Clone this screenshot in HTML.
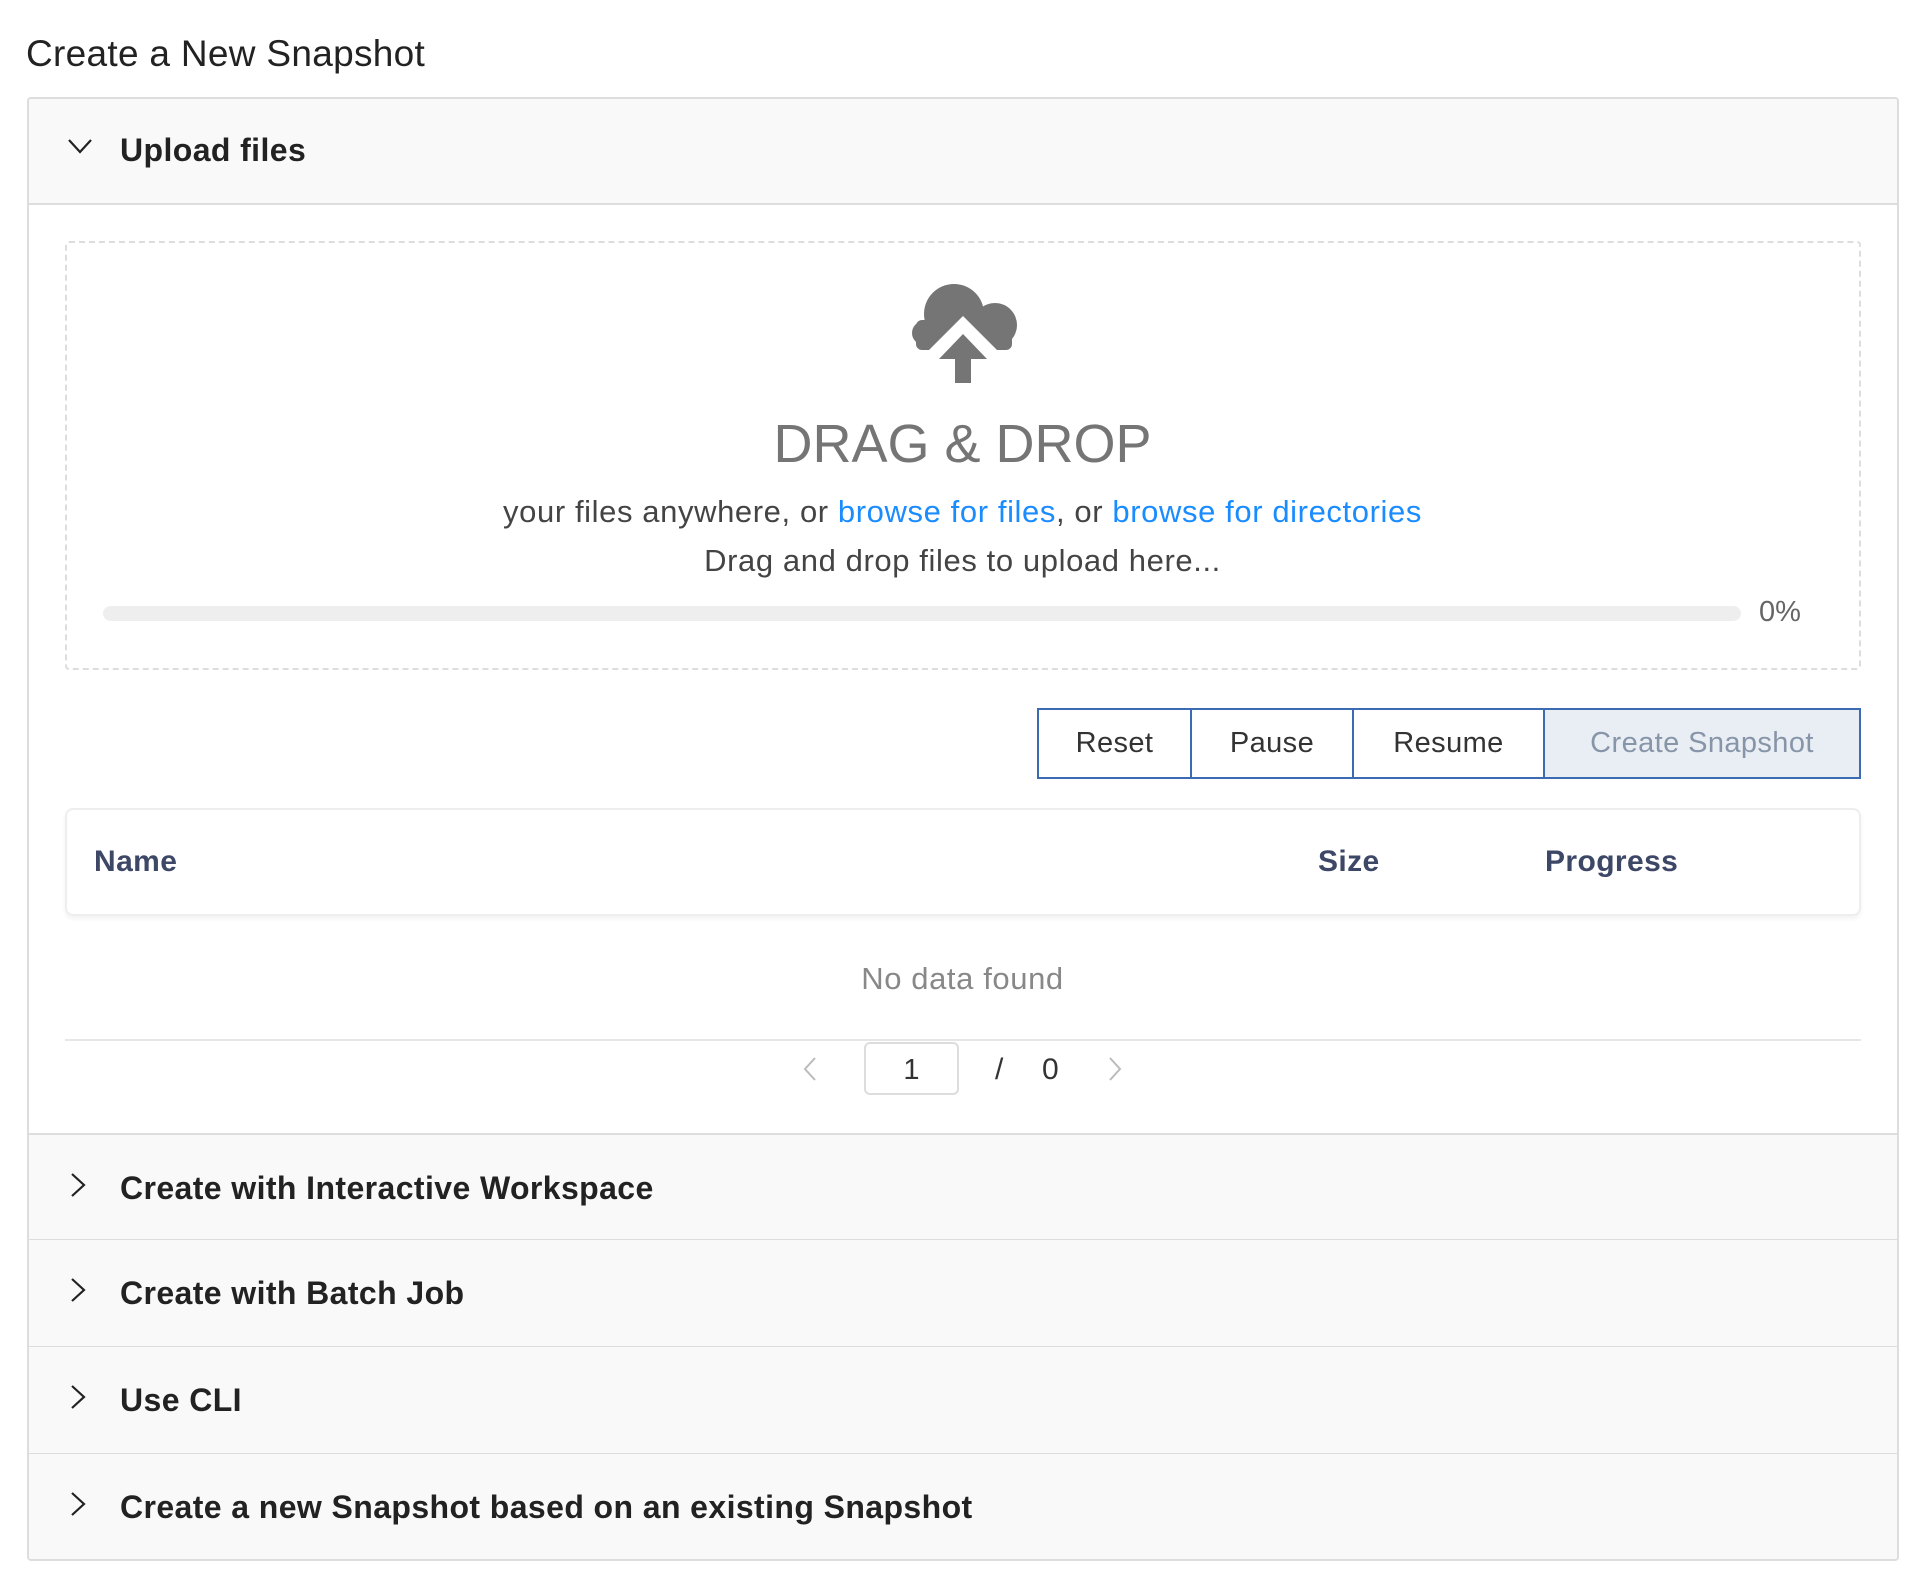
<!DOCTYPE html>
<html><head><meta charset="utf-8"><style>
*{box-sizing:border-box;margin:0;padding:0}
body{width:1920px;height:1588px;background:#fff;font-family:"Liberation Sans",sans-serif;position:relative;overflow:hidden;color:#222}
.a{position:absolute;white-space:nowrap}
.card{position:absolute;left:27px;top:97px;width:1872px;height:1464px;border:2px solid #ddd;border-radius:4px;overflow:hidden}
.hd{position:absolute;left:0;width:100%;background:#f9f9f9;border-bottom:2px solid #ddd}
.ht{position:absolute;left:91px;font-weight:bold;font-size:32px;color:#222;letter-spacing:0.4px}
.btn{position:absolute;top:708px;height:71px;border:2px solid #3b6cb3;background:#fff;font-size:29px;color:#333;text-align:center;line-height:67px;letter-spacing:0.4px}
.th{position:absolute;top:845px;font-weight:bold;font-size:30px;color:#3d4766;letter-spacing:0.4px}
</style></head><body>
<div class="a" style="left:26px;top:33px;font-size:37px;color:#222;letter-spacing:0.3px">Create a New Snapshot</div>
<div class="card">
 <div class="hd" style="top:0;height:106px">
  <svg class="a" style="left:38px;top:38px" width="26" height="18"><path d="M2 3 L13 15 L24 3" stroke="#222" stroke-width="2.2" fill="none"/></svg>
  <div class="ht" style="top:33px">Upload files</div>
 </div>
 <div class="hd" style="top:1034px;height:108px;border-top:2px solid #ddd"><svg class="a" style="left:40px;top:36px" width="18" height="28"><path d="M3 3 L15 14 L3 25" stroke="#222" stroke-width="2.2" fill="none"/></svg><div class="ht" style="top:35px">Create with Interactive Workspace</div></div>
 <div class="hd" style="top:1141px;height:108px"><svg class="a" style="left:40px;top:36px" width="18" height="28"><path d="M3 3 L15 14 L3 25" stroke="#222" stroke-width="2.2" fill="none"/></svg><div class="ht" style="top:35px">Create with Batch Job</div></div>
 <div class="hd" style="top:1248px;height:108px"><svg class="a" style="left:40px;top:36px" width="18" height="28"><path d="M3 3 L15 14 L3 25" stroke="#222" stroke-width="2.2" fill="none"/></svg><div class="ht" style="top:35px">Use CLI</div></div>
 <div class="hd" style="top:1355px;height:110px;border-bottom:none"><svg class="a" style="left:40px;top:36px" width="18" height="28"><path d="M3 3 L15 14 L3 25" stroke="#222" stroke-width="2.2" fill="none"/></svg><div class="ht" style="top:35px">Create a new Snapshot based on an existing Snapshot</div></div>
</div>
<div class="a" style="left:65px;top:241px;width:1796px;height:429px;border:2px dashed #ddd;border-radius:4px"></div>
<svg class="a" style="left:0;top:0" width="1920" height="400">
 <defs><mask id="m"><rect width="1920" height="400" fill="#fff"/><path d="M927 352 L963 316 L999 352 Z" fill="#000"/></mask></defs>
 <g fill="#757575" mask="url(#m)">
  <circle cx="924" cy="333" r="12"/><circle cx="954" cy="314" r="30"/><circle cx="995" cy="325" r="22"/>
  <rect x="916" y="320" width="96" height="30" rx="6"/>
 </g>
 <path d="M963 334 L987 359 L971 359 L971 383 L955 383 L955 359 L939 359 Z" fill="#757575"/>
</svg>
<div class="a" style="left:0;width:1925px;text-align:center;top:413px;font-size:54px;color:#757575">DRAG &amp; DROP</div>
<div class="a" style="left:0;width:1925px;text-align:center;top:494px;font-size:31px;color:#444;letter-spacing:0.6px">your files anywhere, or <span style="color:#1a8cff">browse for files</span>, or <span style="color:#1a8cff">browse for directories</span></div>
<div class="a" style="left:0;width:1925px;text-align:center;top:543px;font-size:31px;color:#444;letter-spacing:0.6px">Drag and drop files to upload here...</div>
<div class="a" style="left:103px;top:606px;width:1638px;height:15px;background:#eee;border-radius:8px"></div>
<div class="a" style="left:1759px;top:596px;font-size:29px;color:#666">0%</div>
<div class="btn" style="left:1037px;width:155px">Reset</div>
<div class="btn" style="left:1190px;width:164px">Pause</div>
<div class="btn" style="left:1352px;width:193px">Resume</div>
<div class="btn" style="left:1543px;width:318px;background:#e9eef4;color:#8795a8">Create Snapshot</div>
<div class="a" style="left:65px;top:808px;width:1796px;height:108px;border:2px solid #eee;border-radius:8px;box-shadow:0 3px 4px rgba(0,0,0,0.05)"></div>
<div class="th" style="left:94px">Name</div>
<div class="th" style="left:1318px">Size</div>
<div class="th" style="left:1545px">Progress</div>
<div class="a" style="left:0;width:1925px;text-align:center;top:961px;font-size:31px;color:#888;letter-spacing:0.6px">No data found</div>
<div class="a" style="left:65px;top:1039px;width:1796px;height:2px;background:#e6e6e6"></div>
<svg class="a" style="left:800px;top:1055px" width="20" height="28"><path d="M15 3 L5 14 L15 25" stroke="#bbb" stroke-width="2" fill="none"/></svg>
<div class="a" style="left:864px;top:1042px;width:95px;height:53px;border:2px solid #ddd;border-radius:6px;text-align:center;line-height:52px;font-size:29px;color:#333">1</div>
<div class="a" style="left:995px;top:1053px;font-size:30px;color:#333">/</div>
<div class="a" style="left:1042px;top:1053px;font-size:30px;color:#333">0</div>
<svg class="a" style="left:1105px;top:1055px" width="20" height="28"><path d="M5 3 L15 14 L5 25" stroke="#bbb" stroke-width="2" fill="none"/></svg>
</body></html>
